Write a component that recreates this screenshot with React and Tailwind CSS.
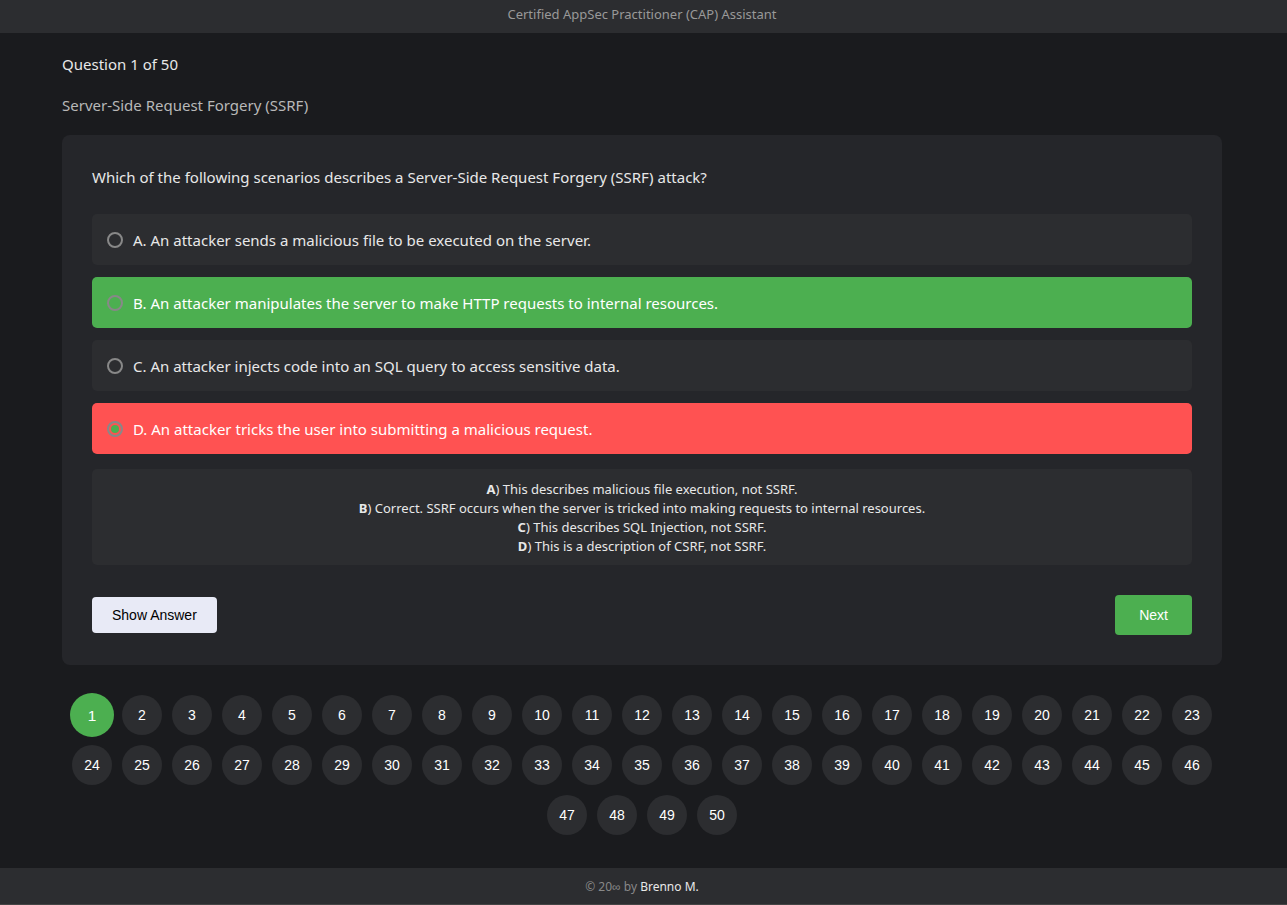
import { useState } from "react";

const options = [
  { id: "A", text: "An attacker sends a malicious file to be executed on the server." },
  { id: "B", text: "An attacker manipulates the server to make HTTP requests to internal resources." },
  { id: "C", text: "An attacker injects code into an SQL query to access sensitive data." },
  { id: "D", text: "An attacker tricks the user into submitting a malicious request." },
];

const explanations = [
  { id: "A", text: "This describes malicious file execution, not SSRF." },
  { id: "B", text: "Correct. SSRF occurs when the server is tricked into making requests to internal resources." },
  { id: "C", text: "This describes SQL Injection, not SSRF." },
  { id: "D", text: "This is a description of CSRF, not SSRF." },
];

const correct = "B";

function optionTone(id, selected) {
  if (id === correct) return "bg-[#4caf50] text-white";
  if (id === selected) return "bg-[#ff5252] text-white";
  return "bg-[#2c2d30] text-[#e8e8e8]";
}

function Option({ option, selected, onSelect }) {
  return (
    <label className={`flex items-center gap-2.5 rounded-[5px] px-[15px] pt-3.5 pb-[13px] leading-6 ${optionTone(option.id, selected)}`}>
      <input
        type="radio"
        name="answer"
        value={option.id}
        checked={selected === option.id}
        onChange={() => onSelect(option.id)}
        className="grid size-4 shrink-0 appearance-none place-items-center rounded-full border-2 border-[#888] before:size-2 before:rounded-full checked:before:bg-[#4caf50]"
      />
      <span>
        {option.id}. {option.text}
      </span>
    </label>
  );
}

export default function App() {
  const [selected, setSelected] = useState("D");
  const [current, setCurrent] = useState(1);
  const numbers = Array.from({ length: 50 }, (_, i) => i + 1);

  return (
    <div className="flex min-h-screen flex-col bg-[#1a1b1e] font-['Segoe_UI','Noto_Sans',sans-serif] text-[15px] text-[#e8e8e8]">
      <header className="bg-[#2c2d30] pt-1 pr-[3px] pb-2 text-center text-[13px] leading-[21px] text-[#999]">
        <h1>Certified AppSec Practitioner (CAP) Assistant</h1>
      </header>

      <main className="w-full grow pr-[3px]">
        <div className="mx-auto max-w-[1200px] px-5 pt-[19px] pb-[33px]">
          <p className="leading-6">Question {current} of 50</p>
          <h2 className="mt-[17px] leading-6 text-[#b8b8b8]">Server-Side Request Forgery (SSRF)</h2>

          <section className="mt-[18px] rounded-lg bg-[#25262a] p-[30px]">
            <fieldset>
              <legend className="mb-[25px] leading-6">
                Which of the following scenarios describes a Server-Side Request Forgery (SSRF) attack?
              </legend>
              <div className="flex flex-col gap-3">
                {options.map((option) => (
                  <Option key={option.id} option={option} selected={selected} onSelect={setSelected} />
                ))}
              </div>
            </fieldset>

            <div className="mt-[15px] rounded-[5px] bg-[#2c2d30] px-2.5 pt-[11px] pb-[9px] text-center text-[13px] leading-[19px]">
              {explanations.map((item) => (
                <p key={item.id}>
                  <b>{item.id}</b>) {item.text}
                </p>
              ))}
            </div>

            <div className="mt-[30px] flex items-center justify-between font-['Liberation_Sans',sans-serif] text-sm">
              <button type="button" className="h-9 rounded bg-[#e8eaf6] px-5 text-black">
                Show Answer
              </button>
              <button type="button" className="h-10 rounded bg-[#4caf50] px-6 text-white">
                Next
              </button>
            </div>
          </section>

          <nav aria-label="Questions" className="mt-[30px] flex flex-wrap justify-center gap-2.5 font-['Liberation_Sans',sans-serif] text-sm text-white">
            {numbers.map((n) => (
              <button
                key={n}
                type="button"
                onClick={() => setCurrent(n)}
                className={`size-10 rounded-full ${n === current ? "scale-110 bg-[#4caf50]" : "bg-[#2c2d30]"}`}
              >
                {n}
              </button>
            ))}
          </nav>
        </div>
      </main>

      <footer className="border-b border-[#444] bg-[#2c2d30] pt-[9px] pr-[3px] pb-[7px] text-center text-xs leading-5 text-[#888]">
        © 20∞ by{" "}
        <a href="#author" className="text-[#e8e8e8]">
          Brenno M.
        </a>
      </footer>
    </div>
  );
}
